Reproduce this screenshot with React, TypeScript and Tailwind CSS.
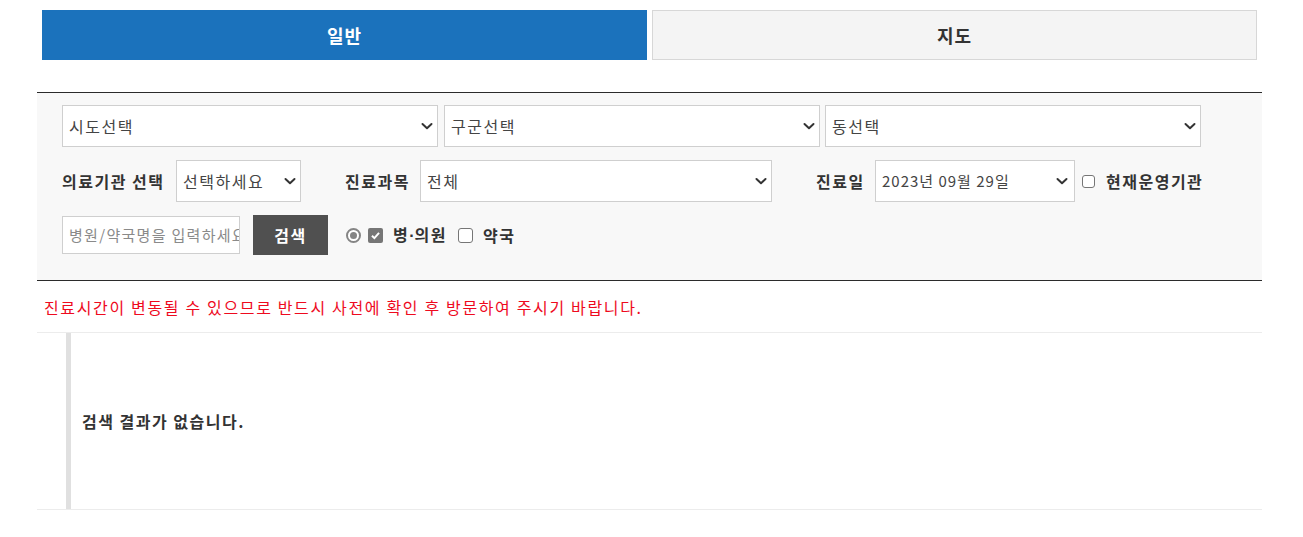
import React from "react";

const FONT = { fontFamily: '"Noto Sans CJK KR", "Noto Sans", sans-serif' };

// --- select look-alike (chevron on the right) ---
interface FakeSelectProps {
  value: string;
  className?: string;
  textClass?: string;
}

const Chevron: React.FC = () => (
  <svg width="12" height="12" viewBox="0 0 12 12" className="shrink-0">
    <path d="M1.5 4l4.5 4.2L10.5 4" fill="none" stroke="#333" strokeWidth={2} strokeLinecap="round" strokeLinejoin="round" />
  </svg>
);

const FakeSelect: React.FC<FakeSelectProps> = ({
  value,
  className = "",
  textClass = "text-[16px] tracking-[1.5px]",
}) => (
  <div
    className={`flex shrink-0 items-center justify-between border border-[#cfcfcf] bg-white pl-[6px] pr-[4px] ${className}`}
  >
    <span className={`${textClass} text-[#444] leading-normal whitespace-nowrap`}>{value}</span>
    <Chevron />
  </div>
);

const CheckBox: React.FC<{ checked?: boolean; size?: string }> = ({ checked, size = "h-[15px] w-[15px]" }) =>
  checked ? (
    <span className={`flex ${size} items-center justify-center rounded-[2px] bg-[#767676]`}>
      <svg width="11" height="11" viewBox="0 0 10 10">
        <path d="M1.8 5.2l2.2 2.2 4.2-4.8" fill="none" stroke="#fff" strokeWidth={1.8} />
      </svg>
    </span>
  ) : (
    <span className={`block ${size} rounded-[3px] border border-[#767676] bg-white`} />
  );

const Radio: React.FC = () => (
  <span className="flex h-[15px] w-[15px] items-center justify-center rounded-full border-2 border-[#858585] bg-white">
    <span className="block h-[7px] w-[7px] rounded-full bg-[#858585]" />
  </span>
);

export default function App() {
  return (
    <div className="w-[1303px] bg-white text-[#333]" style={FONT}>
      <div className="ml-[37px] w-[1225px]">
        {/* tabs */}
        <div className="flex gap-[5px] pl-[5px] pt-[10px]">
          <div className="flex h-[50px] w-[605px] items-center justify-center bg-[#1b72bc] text-[18px] font-bold tracking-[1px] text-white">
            일반
          </div>
          <div className="flex h-[50px] w-[605px] items-center justify-center border border-[#d7d7d7] bg-[#f4f4f4] text-[18px] font-bold tracking-[1px] text-[#333]">
            지도
          </div>
        </div>

        {/* filter panel */}
        <div className="mt-[32px] border-y border-[#2b2b2b] bg-[#f8f8f8] pl-[25px] pt-[12px] pb-[25px]">
          <div className="flex h-[42px]">
            <FakeSelect value="시도선택" className="w-[376px]" />
            <FakeSelect value="구군선택" className="ml-[6px] w-[376px]" />
            <FakeSelect value="동선택" className="ml-[5px] w-[376px]" />
          </div>

          <div className="mt-[13px] flex h-[42px] items-center">
            <span className="w-[114px] shrink-0 text-[16px] font-bold tracking-[1.5px] text-[#333]">의료기관 선택</span>
            <FakeSelect value="선택하세요" className="h-full w-[125px]" />
            <span className="ml-[44px] w-[75px] shrink-0 text-[16px] font-bold tracking-[1.5px] text-[#333]">진료과목</span>
            <FakeSelect value="전체" className="h-full w-[352px]" />
            <span className="ml-[44px] w-[59px] shrink-0 text-[16px] font-bold tracking-[1.5px] text-[#333]">진료일</span>
            <FakeSelect
              value="2023년 09월 29일"
              className="h-full w-[200px] pr-[6px]"
              textClass="text-[15px] tracking-[1px]"
            />
            <span className="ml-[7px]">
              <CheckBox size="h-[13px] w-[13px]" />
            </span>
            <span className="ml-[11px] text-[16px] font-bold tracking-[1.5px] text-[#333]">현재운영기관</span>
          </div>

          <div className="mt-[13px] flex h-[40px] items-center">
            <div className="flex h-[38px] w-[178px] shrink-0 items-center overflow-hidden whitespace-nowrap border border-[#cfcfcf] bg-white px-[6px] text-[15px] tracking-[1.3px] text-[#8a8a8a]">
              병원/약국명을 입력하세요
            </div>
            <div className="ml-[13px] flex h-[40px] w-[75px] shrink-0 items-center justify-center bg-[#505050] text-[16px] font-bold tracking-[1.5px] text-white">
              검색
            </div>
            <span className="ml-[18px]">
              <Radio />
            </span>
            <span className="ml-[7px]">
              <CheckBox checked />
            </span>
            <span className="ml-[10px] text-[16px] font-bold tracking-[1.5px] text-[#333]">
              병<span className="font-['Liberation_Sans'] tracking-normal">·</span>의원
            </span>
            <span className="ml-[11px]">
              <CheckBox />
            </span>
            <span className="ml-[10px] text-[16px] font-bold tracking-[1.5px] text-[#333]">약국</span>
          </div>
        </div>

        {/* notice */}
        <div className="flex h-[52px] items-center border-b border-[#ececec] pl-[7px] text-[16px] tracking-[1.65px] text-[#ee0a1e]">
          진료시간이 변동될 수 있으므로 반드시 사전에 확인 후 방문하여 주시기 바랍니다.
        </div>

        {/* results */}
        <div className="flex h-[177px] border-b border-[#ececec] pl-[29px]">
          <div className="w-[5px] bg-[#e0e0e0]" />
          <div className="flex items-center pl-[11px] text-[16px] font-bold tracking-[1.5px] text-[#333]">
            검색 결과가 없습니다.
          </div>
        </div>
      </div>
    </div>
  );
}
